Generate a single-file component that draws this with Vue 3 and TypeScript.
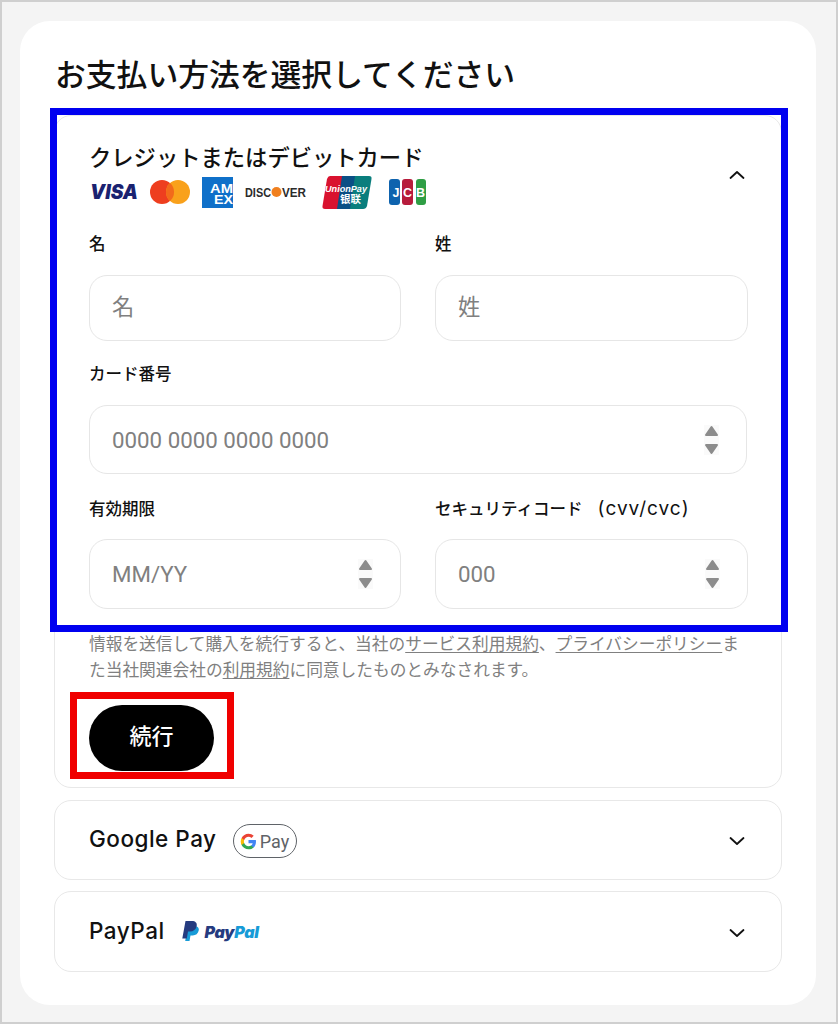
<script setup lang="ts">
const legalA = '情報を送信して購入を続行すると、当社の'
</script>

<template>
  <div class="page">
    <main class="card">
      <h1 class="title">お支払い方法を選択してください</h1>

      <section class="item item-open">
        <span class="mark mark-blue"></span>
        <header class="open-head">
          <div>
            <div class="method-ja">クレジットまたはデビットカード</div>
            <div class="logos">
              <svg class="l-visa" width="50" height="24" viewBox="0 0 50 24"><text x="0" y="19" class="visa-t" textLength="48" lengthAdjust="spacingAndGlyphs">VISA</text></svg>
              <svg class="l-mc" width="40" height="26" viewBox="0 0 40 26"><circle cx="12" cy="13" r="12" fill="#ee3e1f"/><circle cx="28" cy="13" r="12" fill="#f9a11b"/><path d="M20 4a12 12 0 0 1 0 18a12 12 0 0 1 0-18z" fill="#f26a1b"/></svg>
              <svg class="l-amex" width="31" height="31" viewBox="0 0 31 31"><rect width="31" height="31" fill="#0f70c9"/><text x="8" y="16" class="amex-t" textLength="23" lengthAdjust="spacingAndGlyphs">AM</text><text x="12" y="27" class="amex-t" textLength="19" lengthAdjust="spacingAndGlyphs">EX</text></svg>
              <svg class="l-disc" width="62" height="14" viewBox="0 0 62 14"><text x="0" y="12" class="disc-t" textLength="26" lengthAdjust="spacingAndGlyphs">DISC</text><circle cx="31.500" cy="7" r="5" fill="#f0801f"/><text x="37" y="12" class="disc-t" textLength="24" lengthAdjust="spacingAndGlyphs">VER</text></svg>
              <svg class="l-up" width="50" height="33" viewBox="0 0 50 33"><path d="M8 0H23L18 33H3Q0 33 .5 30L5 3Q6 0 8 0z" fill="#d9122f"/><path d="M20 0H37L32 33H15z" fill="#0b4f85"/><path d="M33 0H47Q50 0 49.500 3L45 30Q44 33 41 33H28z" fill="#0a7e7d"/><text x="3" y="16" class="up-t" textLength="42" lengthAdjust="spacingAndGlyphs">UnionPay</text><text x="18" y="27" class="up-c">银联</text></svg>
              <svg class="l-jcb" width="37" height="26" viewBox="0 0 37 26"><rect x="0" width="11" height="26" rx="3" fill="#0e63ae"/><rect x="13" width="11" height="26" rx="3" fill="#b71c3c"/><rect x="27" width="10" height="26" rx="3" fill="#2f9e45"/><text x="7" y="18" class="jcb-t">J</text><text x="18.500" y="18" class="jcb-t">C</text><text x="31.500" y="18" class="jcb-t">B</text></svg>
            </div>
          </div>
          <svg class="chev" width="18" height="10" viewBox="0 0 18 10"><path d="M2.500 8 9 2l6.500 6" /></svg>
        </header>

        <div class="form">
          <div class="row two first">
            <label class="field"><span class="lab">名</span><input class="inp h66" placeholder="名" /></label>
            <label class="field"><span class="lab">姓</span><input class="inp h66" placeholder="姓" /></label>
          </div>
          <div class="row">
            <label class="field">
              <span class="lab">カード番号</span>
              <span class="wrap"><input class="inp h69" placeholder="0000 0000 0000 0000" />
                <svg class="spin" width="15" height="30" viewBox="0 0 15 30"><path d="M7.500 2 13 10H2z" /><path d="M2 20H13L7.500 28z" /></svg>
              </span>
            </label>
          </div>
          <div class="row two last">
            <label class="field">
              <span class="lab">有効期限</span>
              <span class="wrap"><input class="inp h70" placeholder="MM/YY" />
                <svg class="spin" width="15" height="30" viewBox="0 0 15 30"><path d="M7.500 2 13 10H2z" /><path d="M2 20H13L7.500 28z" /></svg>
              </span>
            </label>
            <label class="field">
              <span class="lab">セキュリティコード<span class="cvv">(cvv/cvc)</span></span>
              <span class="wrap"><input class="inp h70" placeholder="000" />
                <svg class="spin" width="15" height="30" viewBox="0 0 15 30"><path d="M7.500 2 13 10H2z" /><path d="M2 20H13L7.500 28z" /></svg>
              </span>
            </label>
          </div>
        </div>

        <p class="legal">{{ legalA }}<u>サービス利用規約</u>、<u>プライバシーポリシー</u>また当社関連会社の<u>利用規約</u>に同意したものとみなされます。</p>

        <div class="btn-box">
          <span class="mark mark-red"></span>
          <button class="btn">続行</button>
        </div>
      </section>

      <section class="item closed">
        <div class="closed-l">
          <span class="method-en">Google Pay</span>
          <span class="gpay">
            <svg width="17" height="17" viewBox="0 0 48 48"><path fill="#4285f4" d="M45.100 24.500c0-1.600-.1-3.100-.4-4.500H24v8.700h11.800c-.5 2.700-2 5-4.400 6.600v5.500h7.100c4.200-3.800 6.600-9.500 6.600-16.300z"/><path fill="#34a853" d="M24 46c5.900 0 10.900-2 14.500-5.300l-7.100-5.500c-2 1.300-4.500 2.100-7.400 2.100-5.700 0-10.500-3.800-12.200-9H4.500v5.600C8.100 41.100 15.500 46 24 46z"/><path fill="#fbbc05" d="M11.800 28.300c-.4-1.300-.7-2.800-.7-4.300s.3-3 .7-4.300v-5.600H4.500C3 17 2 20.400 2 24s1 7 2.500 9.900z"/><path fill="#ea4335" d="M24 10.700c3.200 0 6.100 1.100 8.400 3.300l6.300-6.300C34.900 4.100 29.900 2 24 2 15.500 2 8.100 6.900 4.500 14.100l7.300 5.600c1.700-5.200 6.500-9 12.200-9z"/></svg>
            <span class="gpay-t">Pay</span>
          </span>
        </div>
        <svg class="chev" width="18" height="10" viewBox="0 0 18 10"><path d="M2.500 2 9 8l6.500-6" /></svg>
      </section>

      <section class="item closed pp">
        <div class="closed-l">
          <span class="method-en">PayPal</span>
          <span class="pp-logo">
            <svg width="17" height="21" viewBox="0 0 17 21"><path fill="#179bd7" d="M6 5h6.500c3 0 4.800 1.700 4.200 4.600-.6 3.200-2.900 4.900-6 4.900H8.500L7.500 20H3.200z"/><path fill="#253b80" d="M3.500 0h6.300c3.700 0 5.500 2 4.900 5-.7 3.600-3.300 5.500-6.700 5.500H6l-1.200 7H.300z"/></svg>
            <span class="pp-t"><b class="pay">Pay</b><b class="pal">Pal</b></span>
          </span>
        </div>
        <svg class="chev" width="18" height="10" viewBox="0 0 18 10"><path d="M2.500 2 9 8l6.500-6" /></svg>
      </section>
    </main>
  </div>
</template>

<style>
html, body { margin: 0; padding: 0; }
</style>

<style scoped>
.page {
  box-sizing: border-box;
  width: 838px;
  height: 1024px;
  border: 2px solid #cfcfcf;
  background: #f4f4f4;
  padding: 19px 20px 17px 18px;
  font-family: "Inter", "Noto Sans CJK JP", sans-serif;
  color: #111;
}
.card {
  box-sizing: border-box;
  height: 100%;
  background: #fff;
  border-radius: 30px;
  padding: 30px 34px 0;
  display: flex;
  flex-direction: column;
}
.title {
  margin: 0 0 20px;
  font: 500 30.800px/44px "Noto Sans CJK JP", sans-serif;
  padding-left: 1px;
  height: 44px;
}
.item {
  box-sizing: border-box;
  border: 1px solid #e8e8e8;
  border-radius: 17px;
  position: relative;
}
.item-open {
  height: 673px;
  padding: 0 34px;
  margin-bottom: 12px;
}
.mark { position: absolute; box-sizing: border-box; pointer-events: none; z-index: 2; }
.mark-blue {
  left: -5px; top: -8px;
  width: 738px; height: 524px;
  border: 7px solid #0000f0;
}
.mark-red {
  left: -19px; top: -13px;
  width: 164px; height: 87px;
  border: 7px solid #f00000;
}
.open-head {
  display: flex;
  justify-content: space-between;
  align-items: center;
  padding-top: 24px;
}
.open-head .chev { margin-right: 1px; }
.method-ja { font: 500 22.300px/32px "Noto Sans CJK JP", sans-serif; }
.logos { display: flex; align-items: center; height: 34px; margin-top: 3px; }
.logos svg { display: block; flex: none; }
.l-visa { margin-left: 1px; margin-right: 10px; }
.l-mc { margin-right: 12px; }
.l-amex { margin-right: 12px; }
.l-disc { margin-right: 15px; }
.l-up { margin-right: 17px; }
.visa-t { font: italic 900 20px Inter, sans-serif; fill: #1a2270; }
.amex-t { font: 700 13.500px "Liberation Sans", sans-serif; fill: #fff; }
.disc-t { font: 700 12.500px "Liberation Sans", sans-serif; fill: #2b2b2b; }
.up-t { font: italic 800 9.500px "Liberation Sans", sans-serif; fill: #fff; }
.up-c { font: 700 10.500px "Noto Sans CJK SC", sans-serif; fill: #fff; }
.jcb-t { font: 700 12.500px "Liberation Sans", sans-serif; fill: #fff; text-anchor: middle; }
.form { display: flex; flex-direction: column; }
.row { margin-top: 23px; }
.row.first { margin-top: 25px; }
.row.last { margin-top: 25px; }
.row.two { display: grid; grid-template-columns: 312px 313px; column-gap: 34px; }
.field { display: flex; flex-direction: column; }
.lab {
  font: 500 16.500px/20px "Inter", "Noto Sans CJK JP", sans-serif;
  margin-bottom: 21px;
}
.cvv { font-size: 19px; letter-spacing: 1px; margin-left: 15px; font-weight: 400; }
.last .lab { margin-bottom: 20px; }
.wrap { position: relative; display: block; }
.inp {
  box-sizing: border-box;
  display: block;
  width: 100%;
  border: 1px solid #e6e6e6;
  border-radius: 18px;
  background: #fff;
  padding: 0 22px;
  font: 400 22.300px "Roboto", "Noto Sans CJK JP", sans-serif;
  outline: none;
}
.inp::placeholder { color: #808080; opacity: 1; }
.h66 { height: 66px; padding-bottom: 3px; }
.h69 { height: 69px; }
.h70 { height: 70px; }
.spin {
  position: absolute;
  right: 28px;
  top: 50%;
  transform: translateY(-50%);
  display: block;
  background: #fafafa;
}
.spin path { fill: #8c8c8c; stroke: #8c8c8c; stroke-width: 2; stroke-linejoin: round; }
.legal {
  margin: 21px 0 0;
  font: 400 16.720px/26px "Noto Sans CJK JP", sans-serif;
  color: #808080;
  width: 660px;
}
.legal u { text-underline-offset: 2px; }
.btn-box { position: relative; margin-top: 23px; width: 125px; }
.btn {
  display: block;
  width: 125px;
  height: 66px;
  border: 0;
  border-radius: 33px;
  background: #000;
  color: #fff;
  font: 500 22px "Noto Sans CJK JP", sans-serif;
  padding: 0 0 8px;
}
.closed {
  height: 80px;
  padding: 0 35px 0 34px;
  display: flex;
  align-items: center;
  justify-content: space-between;
}
.closed .chev { margin-top: 2px; }
.pp { margin-top: 11px; height: 81px; }
.closed-l { display: flex; align-items: center; }
.method-en { font: 500 22.500px/30px "Inter", sans-serif; letter-spacing: .5px; margin-top: -2px; }
.gpay {
  box-sizing: border-box;
  width: 64px;
  height: 34px;
  margin-left: 16px;
  margin-top: 2px;
  border: 1.500px solid #5f6368;
  border-radius: 17px;
  display: flex;
  align-items: center;
  justify-content: center;
  gap: 3px;
}
.gpay svg { display: block; }
.gpay-t { font: 400 18px "Roboto", sans-serif; color: #5f6368; }
.pp-logo { display: flex; align-items: center; margin-left: 17px; gap: 6px; }
.pp-logo svg { display: block; }
.pp-t { font: italic 800 16px "Inter", sans-serif; letter-spacing: -.3px; }
.pay { color: #253b80; }
.pal { color: #179bd7; }
.chev { display: block; flex: none; }
.chev path { fill: none; stroke: #111; stroke-width: 1.800; stroke-linecap: round; stroke-linejoin: round; }
</style>
